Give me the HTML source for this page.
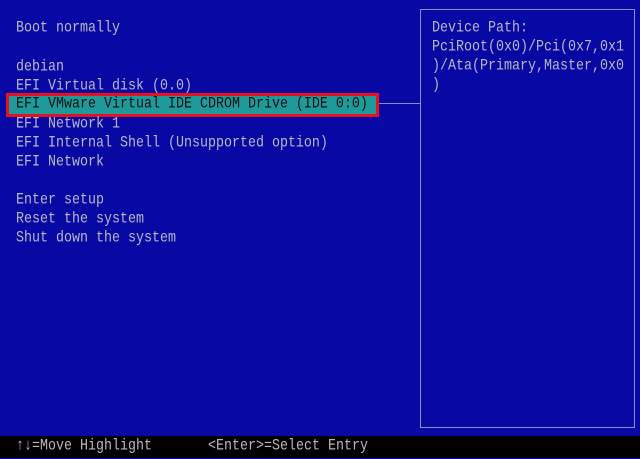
<!DOCTYPE html>
<html><head><style>
html,body{margin:0;padding:0}
body{width:640px;height:458px;background:#0808a4;position:relative;overflow:hidden;font-family:"Liberation Mono",monospace;font-size:13.33px;color:#b8b8c8}
.t{position:absolute;left:16px;white-space:pre;line-height:19px;height:19px;transform:scaleY(1.2);transform-origin:0 50%}
.hl{position:absolute;left:6px;top:93px;width:367px;height:18px;background:#1e9a9a;border:3px solid #e8101c}
.hl span{position:absolute;left:7px;top:-1px;line-height:19px;color:#101010;white-space:pre;transform:scaleY(1.2);transform-origin:0 50%}
.box{position:absolute;left:420px;top:9px;width:213px;height:417px;border:1px solid #8c8cd0}
.line{position:absolute;left:379px;top:103px;width:41px;height:1px;background:#8c8cd0}
.r{position:absolute;left:432px;white-space:pre;line-height:19px;transform:scaleY(1.2);transform-origin:0 50%}
.foot{position:absolute;left:0;top:436px;width:640px;height:22px;background:#000}
.foot span{position:absolute;top:1px;line-height:20px;white-space:pre;color:#b8b8c0;transform:scaleY(1.2);transform-origin:0 50%}
</style></head><body>
<div class="t" style="top:19px">Boot normally</div>
<div class="t" style="top:58px">debian</div>
<div class="t" style="top:77px">EFI Virtual disk (0.0)</div>
<div class="hl"><span>EFI VMware Virtual IDE CDROM Drive (IDE 0:0)</span></div>
<div class="t" style="top:115px">EFI Network 1</div>
<div class="t" style="top:134px">EFI Internal Shell (Unsupported option)</div>
<div class="t" style="top:153px">EFI Network</div>
<div class="t" style="top:191px">Enter setup</div>
<div class="t" style="top:210px">Reset the system</div>
<div class="t" style="top:229px">Shut down the system</div>
<div class="line"></div>
<div class="box"></div>
<div class="r" style="top:19px">Device Path:</div>
<div class="r" style="top:38px">PciRoot(0x0)/Pci(0x7,0x1</div>
<div class="r" style="top:57px">)/Ata(Primary,Master,0x0</div>
<div class="r" style="top:76px">)</div>
<div class="foot"><span style="left:16px">↑↓=Move Highlight</span><span style="left:208px">&lt;Enter&gt;=Select Entry</span></div>
</body></html>
